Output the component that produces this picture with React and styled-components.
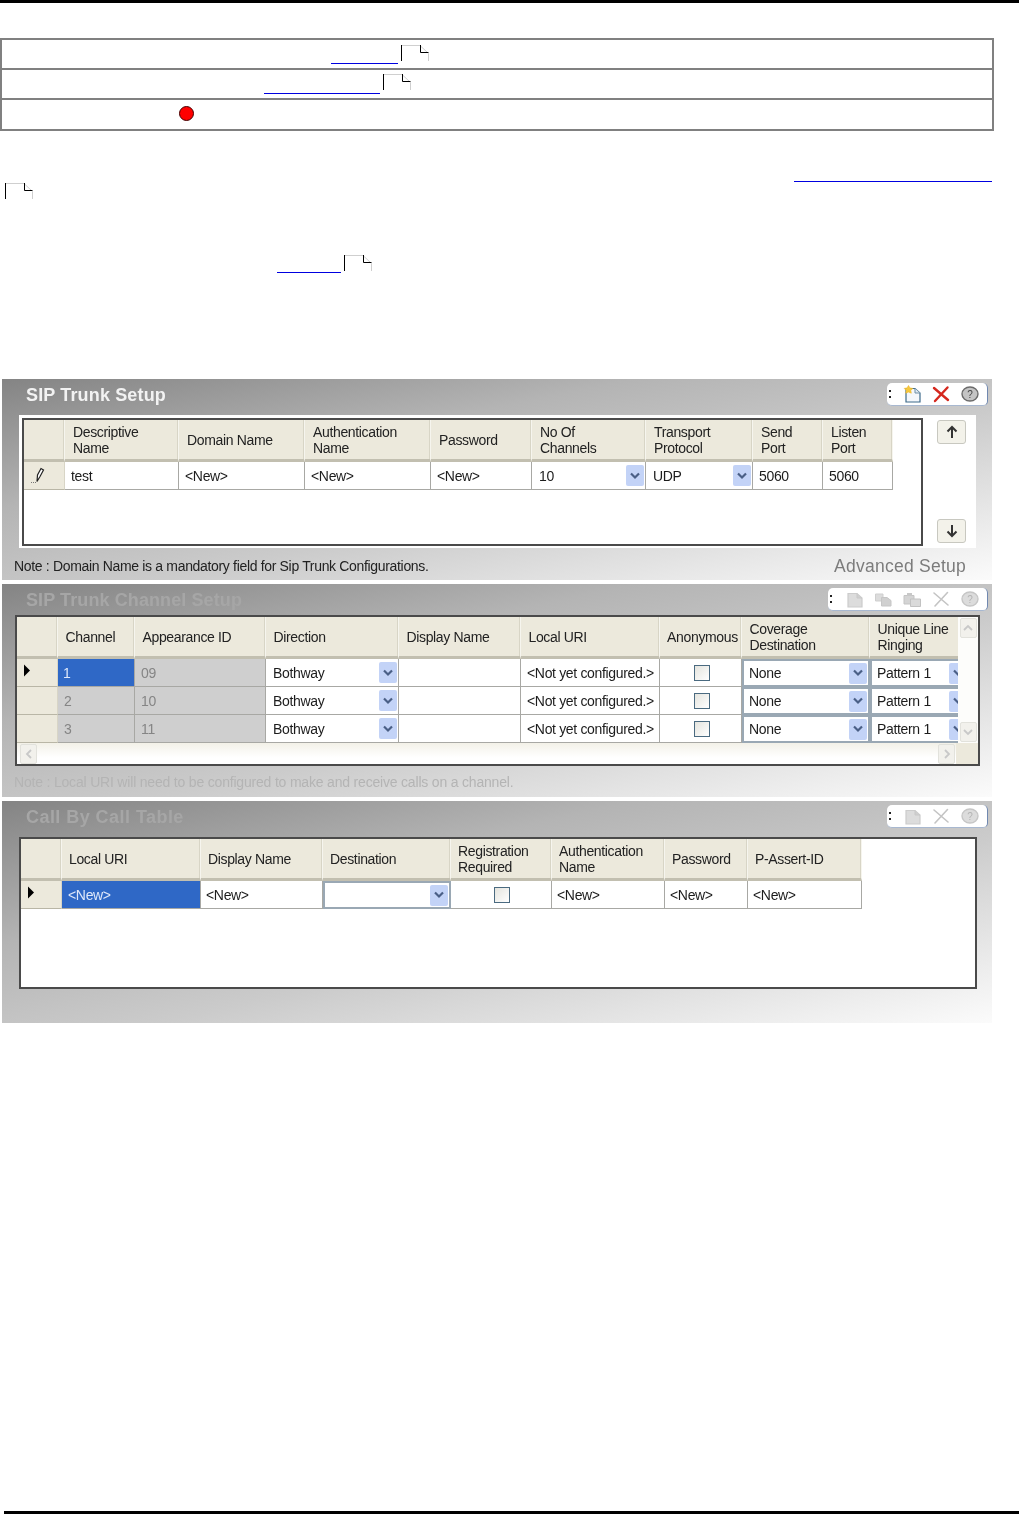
import React from "react";
import styled, { createGlobalStyle } from "styled-components";

const Global = createGlobalStyle`
  html, body { margin: 0; padding: 0; background: #fff; }
  body { font-family: "Liberation Sans", Arial, sans-serif; overflow: hidden; }
`;

const Page = styled.div`
  width: 1019px;
  height: 1514px;
  display: flex;
  flex-direction: column;
  overflow: hidden;
`;
const TopRule = styled.div`
  height: 3px;
  background: #000;
  flex: none;
`;
const BottomRule = styled.div`
  height: 3px;
  background: #000;
  margin: 488px 0 0 4px;
  flex: none;
`;
const InfoTable = styled.div`
  margin-top: 35px;
  width: 994px;
  box-sizing: border-box;
  border: 2px solid #808080;
  flex: none;
`;
const InfoRow = styled.div`
  height: ${(p) => p.$h}px;
  box-sizing: border-box;
  display: flex;
  align-items: flex-end;
  padding-left: ${(p) => p.$indent}px;
  padding-bottom: ${(p) => p.$pb}px;
  border-bottom: ${(p) => (p.$last ? "none" : "2px solid #808080")};
`;
const DeadLink = styled.span`
  display: block;
  flex: none;
  width: ${(p) => p.$w}px;
  height: 0;
  border-bottom: 1px solid #0000e0;
`;
const BrokenSlot = styled.svg`
  display: block;
  flex: none;
  width: 28px;
  height: 16px;
  margin-left: ${(p) => p.$ml ?? 3}px;
  margin-bottom: ${(p) => p.$mb ?? 1}px;
`;
const RedDot = styled.span`
  display: block;
  width: 13px;
  height: 13px;
  border-radius: 50%;
  background: #f00;
  border: 1px solid #400;
  margin-bottom: 6px;
`;
const LinkLine = styled.div`
  margin: 50px 0 0 794px;
  flex: none;
`;
const SlotLine = styled.div`
  margin: 1px 0 0 2px;
  flex: none;
`;
const SeeRow = styled.div`
  margin: 56px 0 0 277px;
  display: flex;
  align-items: flex-end;
  flex: none;
`;
const Panels = styled.div`
  margin: 106px 0 0 2px;
  width: 990px;
  display: flex;
  flex-direction: column;
  gap: 4px;
  flex: none;
`;
const Panel = styled.section`
  height: ${(p) => p.$h}px;
  display: flex;
  flex-direction: column;
  background: linear-gradient(to bottom right, #848484 0%, #b4b4b4 32%, #cbcbcb 58%, #f2f2f2 92%, #fbfbfb 100%);
  filter: blur(0.35px);
`;
const PanelHead = styled.header`
  height: ${(p) => p.$h}px;
  flex: none;
  box-sizing: border-box;
  display: flex;
  justify-content: space-between;
  align-items: flex-start;
  padding: 4px 4px 0 24px;
`;
const PanelTitle = styled.h2`
  margin: 1px 0 0;
  font-size: 18px;
  line-height: 22px;
  font-weight: 700;
  letter-spacing: ${(p) => p.$ls}px;
  color: ${(p) => (p.$dim ? "#a6a6a6" : "#f2f2f2")};
`;
const Toolbar = styled.div`
  width: ${(p) => p.$w}px;
  height: 23px;
  box-sizing: border-box;
  background: #fff;
  border-radius: 5px;
  border-right: 1px solid #7088b0;
  border-bottom: 1px solid #a8b8d0;
  display: flex;
  align-items: center;
  justify-content: flex-end;
  gap: 11px;
  padding-right: 8px;
  position: relative;
`;
const Grip = styled.span`
  position: absolute;
  left: 2px;
  top: 7px;
  width: 2px;
  height: 8px;
  background: linear-gradient(#222 0 2px, transparent 2px 6px, #222 6px 8px);
`;
const ToolSvg = styled.svg`
  width: 18px;
  height: 18px;
  display: block;
  flex: none;
`;
const WhiteArea = styled.div`
  margin: 0 16px 0 17px;
  height: 133px;
  flex: none;
  box-sizing: border-box;
  background: #fff;
  padding: 3px;
  display: flex;
  gap: 14px;
`;
const GridBox = styled.div`
  width: ${(p) => p.$w}px;
  height: ${(p) => p.$h}px;
  margin-left: ${(p) => p.$ml ?? 0}px;
  box-sizing: border-box;
  flex: none;
  border: 2px solid #4a4a4a;
  background: #fff;
  overflow: hidden;
`;
const ScrollGrid = styled.div`
  display: grid;
  grid-template-columns: 941px 20px;
  grid-template-rows: 126px 21px;
`;
const GridClip = styled.div`
  overflow: hidden;
`;
const Row = styled.div`
  display: grid;
  grid-template-columns: ${(p) => p.$cols};
  height: ${(p) => (p.$head ? 42 : 28)}px;
  width: max-content;
`;
const HeadCell = styled.div`
  box-sizing: border-box;
  background: #ece9dc;
  border-bottom: 3px solid #c2bfb0;
  border-right: 1px solid #f6f5ee;
  box-shadow: inset -1px 0 0 #d8d5c6;
  display: flex;
  align-items: center;
  justify-content: ${(p) => (p.$center ? "center" : "flex-start")};
  padding: 1px 2px 0 ${(p) => (p.$center ? 6 : p.$pad)}px;
  font-size: 14px;
  line-height: 16px;
  letter-spacing: -0.35px;
  color: #222;
  white-space: pre-line;
`;
const RowMark = styled.div`
  box-sizing: border-box;
  background: #ece9dc;
  border-bottom: 1px solid #b9b6a6;
  border-right: 1px solid #d8d5c6;
  padding: 5px 0 0 5px;
`;
const cellPad = (p) => {
  if (p.$kind === "sel") return p.$selPad;
  if (p.$kind === "off") return 6;
  if (p.$combo) return 7;
  return p.$pad;
};
const Cell = styled.div`
  box-sizing: border-box;
  display: flex;
  align-items: center;
  overflow: hidden;
  white-space: nowrap;
  padding: 0 0 0 ${cellPad}px;
  font-size: 14px;
  letter-spacing: -0.33px;
  color: ${(p) => (p.$kind === "sel" ? "#dfe8fa" : p.$kind === "off" ? "#858585" : "#1c1c1c")};
  background: ${(p) => (p.$kind === "sel" ? "#2f68c6" : p.$kind === "off" ? "#cfcfcf" : "#fff")};
  border-right: 1px solid #a8a8a4;
  border-bottom: 1px solid #a8a8a4;
  ${(p) => p.$kind === "focus" && "border: 2px solid #9aa8b4; padding: 0 0 0 5px;"}
`;
const ComboArrow = styled.span`
  margin-left: auto;
  margin-right: 1px;
  width: 18px;
  height: 21px;
  flex: none;
  border-radius: 2px;
  background: #c3d3f7;
  display: flex;
  align-items: center;
  justify-content: center;
`;
const Chevron = styled.svg`
  width: 10px;
  height: 8px;
  display: block;
`;
const CheckWrap = styled.div`
  box-sizing: border-box;
  display: flex;
  align-items: center;
  justify-content: center;
  padding-left: 2px;
  background: #fff;
  border-right: 1px solid #a8a8a4;
  border-bottom: 1px solid #a8a8a4;
`;
const CheckBox = styled.span`
  display: block;
  width: 16px;
  height: 16px;
  box-sizing: border-box;
  border: 1px solid #4a6a80;
  background: linear-gradient(135deg, #e4e4de, #fff);
`;
const VScroll = styled.div`
  background: #fdfdfb;
  display: flex;
  flex-direction: column;
  justify-content: space-between;
  align-items: center;
  padding: 1px 0;
`;
const HScroll = styled.div`
  background: linear-gradient(#f3f1e8, #fff 70%);
  display: flex;
  justify-content: space-between;
  align-items: center;
  padding: 0 3px;
`;
const Corner = styled.div`
  background: #ece9dc;
  margin-left: -2px;
`;
const ScrollBtn = styled.span`
  width: ${(p) => p.$w}px;
  height: ${(p) => p.$h}px;
  flex: none;
  border: 1px solid #e2e2dc;
  border-radius: 2px;
  background: #f2f1ec;
  display: flex;
  align-items: center;
  justify-content: center;
`;
const Side = styled.div`
  width: 29px;
  flex: none;
  display: flex;
  flex-direction: column;
  justify-content: space-between;
  padding: 2px 0;
`;
const ArrowBtn = styled.span`
  width: 29px;
  height: 24px;
  box-sizing: border-box;
  border: 1px solid #c8c8c0;
  border-radius: 3px;
  background: #f3f2ea;
  display: flex;
  align-items: center;
  justify-content: center;
`;
const Foot = styled.div`
  flex: 1;
  display: flex;
  justify-content: space-between;
  align-items: center;
  padding: ${(p) => p.$pt ?? 0}px 26px 0 12px;
`;
const Note = styled.p`
  margin: 0;
  font-size: 14px;
  letter-spacing: ${(p) => p.$ls}px;
  color: ${(p) => (p.$dim ? "#b4b4b4" : "#222")};
`;
const Advanced = styled.span`
  font-size: 17.5px;
  letter-spacing: 0.25px;
  color: #7c7c7c;
`;

const Broken = (p) => (
  <BrokenSlot viewBox="0 0 28 16" {...p}>
    <path d="M.5 .5H19L27.5 8.5V16" fill="none" stroke="#cfcfcf" />
    <path d="M.5 0V16" stroke="#000" />
    <path d="M19.5 0V7.5H27.5" fill="none" stroke="#000" />
  </BrokenSlot>
);

const IconNew = ({ dim }) => (
  <ToolSvg viewBox="0 0 18 18">
    <path d="M3 3.5H12L17 8V17H3Z" fill={dim ? "#dcdcdc" : "#f4f7fb"} stroke={dim ? "#cccccc" : "#3d6a8a"} strokeWidth="1.2" />
    <path d="M12 3.5V8H17" fill={dim ? "#cfcfcf" : "#dfe8f0"} stroke={dim ? "#c8c8c8" : "#6f90a8"} />
    {dim ? null : (
      <path d="M5.5 0.5L7 3L9.8 3.4L7.8 5.4L8.3 8.2L5.5 7L2.7 8.2L3.2 5.4L1.2 3.4L4 3Z" fill="#f7c93c" stroke="#eeb72a" strokeWidth="0.6" />
    )}
  </ToolSvg>
);
const IconCopy = () => (
  <ToolSvg viewBox="0 0 18 18">
    <path d="M1.5 4H9V11H1.5Z" fill="#dcdcdc" stroke="#cfcfcf" />
    <path d="M7.5 7.5H13L17 10.5V16H7.5Z" fill="#d0d0d0" stroke="#c6c6c6" />
  </ToolSvg>
);
const IconPaste = () => (
  <ToolSvg viewBox="0 0 18 18">
    <path d="M1 5.5H11V14H1Z" fill="#d4d4d4" stroke="#c4c4c4" />
    <path d="M4 3H9V6H4Z" fill="#c8c8c8" />
    <path d="M7.5 9H17.5V16.5H7.5Z" fill="#dadada" stroke="#c2c2c2" />
  </ToolSvg>
);
const IconX = ({ dim }) => (
  <ToolSvg viewBox="0 0 18 18">
    <path d="M2 3L16 15M15.5 2.5L3 16" fill="none" stroke={dim ? "#c4c4c4" : "#d5281e"} strokeWidth={dim ? 1.6 : 2.4} strokeLinecap="round" />
  </ToolSvg>
);
const IconHelp = ({ dim }) => (
  <ToolSvg viewBox="0 0 18 18">
    <ellipse cx="9" cy="9" rx="8" ry="7" fill={dim ? "#dcdcdc" : "#c4c4c4"} stroke={dim ? "#c6c6c6" : "#6a6a6a"} strokeWidth="1.4" />
    <text x="9" y="12.6" textAnchor="middle" fontSize="10" fontFamily="Liberation Sans, sans-serif" fill={dim ? "#b4b4b4" : "#444"}>?</text>
  </ToolSvg>
);

const Down = () => (
  <Chevron viewBox="0 0 10 8">
    <path d="M1 1.5L5 5.5L9 1.5" fill="none" stroke="#4a5f86" strokeWidth="2.2" />
  </Chevron>
);
const Pencil = () => (
  <svg width="18" height="18" viewBox="0 0 18 18" style={{ display: "block" }}>
    <path d="M8 14.5L8.5 8L12 1.5L14.5 3L11 9.5Z" fill="#fff" stroke="#222" strokeWidth="1.2" />
    <path d="M2 15.5H7" stroke="#777" strokeDasharray="1 1" />
  </svg>
);
const Play = () => (
  <svg width="8" height="13" viewBox="0 0 8 13" style={{ display: "block", marginLeft: 1 }}>
    <path d="M1 0.5L7 6.5L1 12.5Z" fill="#000" />
  </svg>
);
const Arrow = ({ up }) => (
  <svg width="12" height="14" viewBox="0 0 12 14" style={{ transform: up ? "none" : "rotate(180deg)" }}>
    <path d="M6 13V2M1.5 6.5L6 2L10.5 6.5" fill="none" stroke="#333" strokeWidth="2" />
  </svg>
);
const Small = ({ d }) => (
  <svg width="10" height="10" viewBox="0 0 10 10">
    <path d={d} fill="none" stroke="#c8c8c8" strokeWidth="1.8" />
  </svg>
);

const GridRows = ({ cols, head, rows, headPad, pad = 6, selPad = 5 }) => (
  <>
    <Row $cols={cols} $head>
      <HeadCell $pad={headPad} />
      {head.map((h) => (
        <HeadCell key={h} $pad={headPad} $center={h === "Anonymous"}>{h}</HeadCell>
      ))}
    </Row>
    {rows.map((r, i) => (
      <Row $cols={cols} key={i}>
        <RowMark>{r.mark === "edit" ? <Pencil /> : r.mark === "cur" ? <Play /> : null}</RowMark>
        {r.cells.map((c, j) => {
          if (c.check) return <CheckWrap key={j}><CheckBox /></CheckWrap>;
          return (
            <Cell key={j} $kind={c.kind} $combo={c.combo} $pad={pad} $selPad={selPad}>
              {c.t}
              {c.combo && <ComboArrow><Down /></ComboArrow>}
            </Cell>
          );
        })}
      </Row>
    ))}
  </>
);

const px = (a) => a.map((n) => `${n}px`).join(" ");
const t = (s) => ({ t: s });
const N = "<New>";

const trunkCols = px([41, 114, 126, 126, 101, 114, 107, 70, 70]);
const trunkHead = ["Descriptive\nName", "Domain Name", "Authentication\nName", "Password", "No Of\nChannels", "Transport\nProtocol", "Send\nPort", "Listen\nPort"];
const trunkRows = [{ mark: "edit", cells: [t("test"), t(N), t(N), t(N), { t: "10", combo: true }, { t: "UDP", combo: true }, t("5060"), t("5060")] }];

const chanCols = px([41, 77, 131, 133, 122, 139, 82, 128, 100]);
const chanHead = ["Channel", "Appearance ID", "Direction", "Display Name", "Local URI", "Anonymous", "Coverage\nDestination", "Unique Line\nRinging"];
const chanRow = (id, app, sel) => ({
  mark: sel ? "cur" : null,
  cells: [
    { t: id, kind: sel ? "sel" : "off" },
    { t: app, kind: "off" },
    { t: "Bothway", combo: true },
    t(""),
    t("<Not yet configured.>"),
    { check: true },
    { t: "None", combo: true, kind: "focus" },
    { t: "Pattern 1", combo: true, kind: "focus" },
  ],
});
const chanRows = [chanRow("1", "09", true), chanRow("2", "10"), chanRow("3", "11")];

const callCols = px([41, 139, 122, 128, 101, 113, 83, 114]);
const callHead = ["Local URI", "Display Name", "Destination", "Registration\nRequired", "Authentication\nName", "Password", "P-Assert-ID"];
const callRows = [{ mark: "cur", cells: [{ t: N, kind: "sel" }, t(N), { t: "", combo: true, kind: "focus" }, { check: true }, t(N), t(N), t(N)] }];

export default function App() {
  return (
    <Page>
      <Global />
      <TopRule />
      <InfoTable>
        <InfoRow $h={30} $indent={329} $pb={4}>
          <DeadLink $w={67} />
          <Broken $mb={3} />
        </InfoRow>
        <InfoRow $h={30} $indent={262} $pb={4}>
          <DeadLink $w={116} />
          <Broken $mb={4} />
        </InfoRow>
        <InfoRow $h={29} $indent={177} $pb={2} $last>
          <RedDot />
        </InfoRow>
      </InfoTable>
      <LinkLine><DeadLink $w={198} /></LinkLine>
      <SlotLine><Broken $ml={3} $mb={0} /></SlotLine>
      <SeeRow>
        <DeadLink $w={64} />
        <Broken $mb={2} />
      </SeeRow>
      <Panels>
        <Panel $h={201}>
          <PanelHead $h={36}>
            <PanelTitle $ls={0.15}>SIP Trunk Setup</PanelTitle>
            <Toolbar $w={101}>
              <Grip />
              <IconNew />
              <IconX />
              <IconHelp />
            </Toolbar>
          </PanelHead>
          <WhiteArea>
            <GridBox $w={901} $h={128}>
              <GridRows cols={trunkCols} head={trunkHead} rows={trunkRows} headPad={8} />
            </GridBox>
            <Side>
              <ArrowBtn><Arrow up /></ArrowBtn>
              <ArrowBtn><Arrow /></ArrowBtn>
            </Side>
          </WhiteArea>
          <Foot $pt={4}>
            <Note $ls={-0.33}>Note : Domain Name is a mandatory field for Sip Trunk Configurations.</Note>
            <Advanced>Advanced Setup</Advanced>
          </Foot>
        </Panel>
        <Panel $h={213}>
          <PanelHead $h={31}>
            <PanelTitle $dim $ls={0.1}>SIP Trunk Channel Setup</PanelTitle>
            <Toolbar $w={160}>
              <Grip />
              <IconNew dim />
              <IconCopy />
              <IconPaste />
              <IconX dim />
              <IconHelp dim />
            </Toolbar>
          </PanelHead>
          <GridBox $w={965} $h={151} $ml={13}>
            <ScrollGrid>
              <GridClip>
                <GridRows cols={chanCols} head={chanHead} rows={chanRows} headPad={7.5} />
              </GridClip>
              <VScroll>
                <ScrollBtn $w={15} $h={18}><Small d="M1 7L5 3L9 7" /></ScrollBtn>
                <ScrollBtn $w={15} $h={18}><Small d="M1 3L5 7L9 3" /></ScrollBtn>
              </VScroll>
              <HScroll>
                <ScrollBtn $w={15} $h={18}><Small d="M7 1L3 5L7 9" /></ScrollBtn>
                <ScrollBtn $w={15} $h={18}><Small d="M3 1L7 5L3 9" /></ScrollBtn>
              </HScroll>
              <Corner />
            </ScrollGrid>
          </GridBox>
          <Foot>
            <Note $dim $ls={-0.19}>Note : Local URI will need to be configured to make and receive calls on a channel.</Note>
          </Foot>
        </Panel>
        <Panel $h={222}>
          <PanelHead $h={36}>
            <PanelTitle $dim $ls={0.45}>Call By Call Table</PanelTitle>
            <Toolbar $w={101}>
              <Grip />
              <IconNew dim />
              <IconX dim />
              <IconHelp dim />
            </Toolbar>
          </PanelHead>
          <GridBox $w={958} $h={152} $ml={17}>
            <GridRows cols={callCols} head={callHead} rows={callRows} headPad={7} pad={5} selPad={6} />
          </GridBox>
        </Panel>
      </Panels>
      <BottomRule />
    </Page>
  );
}
